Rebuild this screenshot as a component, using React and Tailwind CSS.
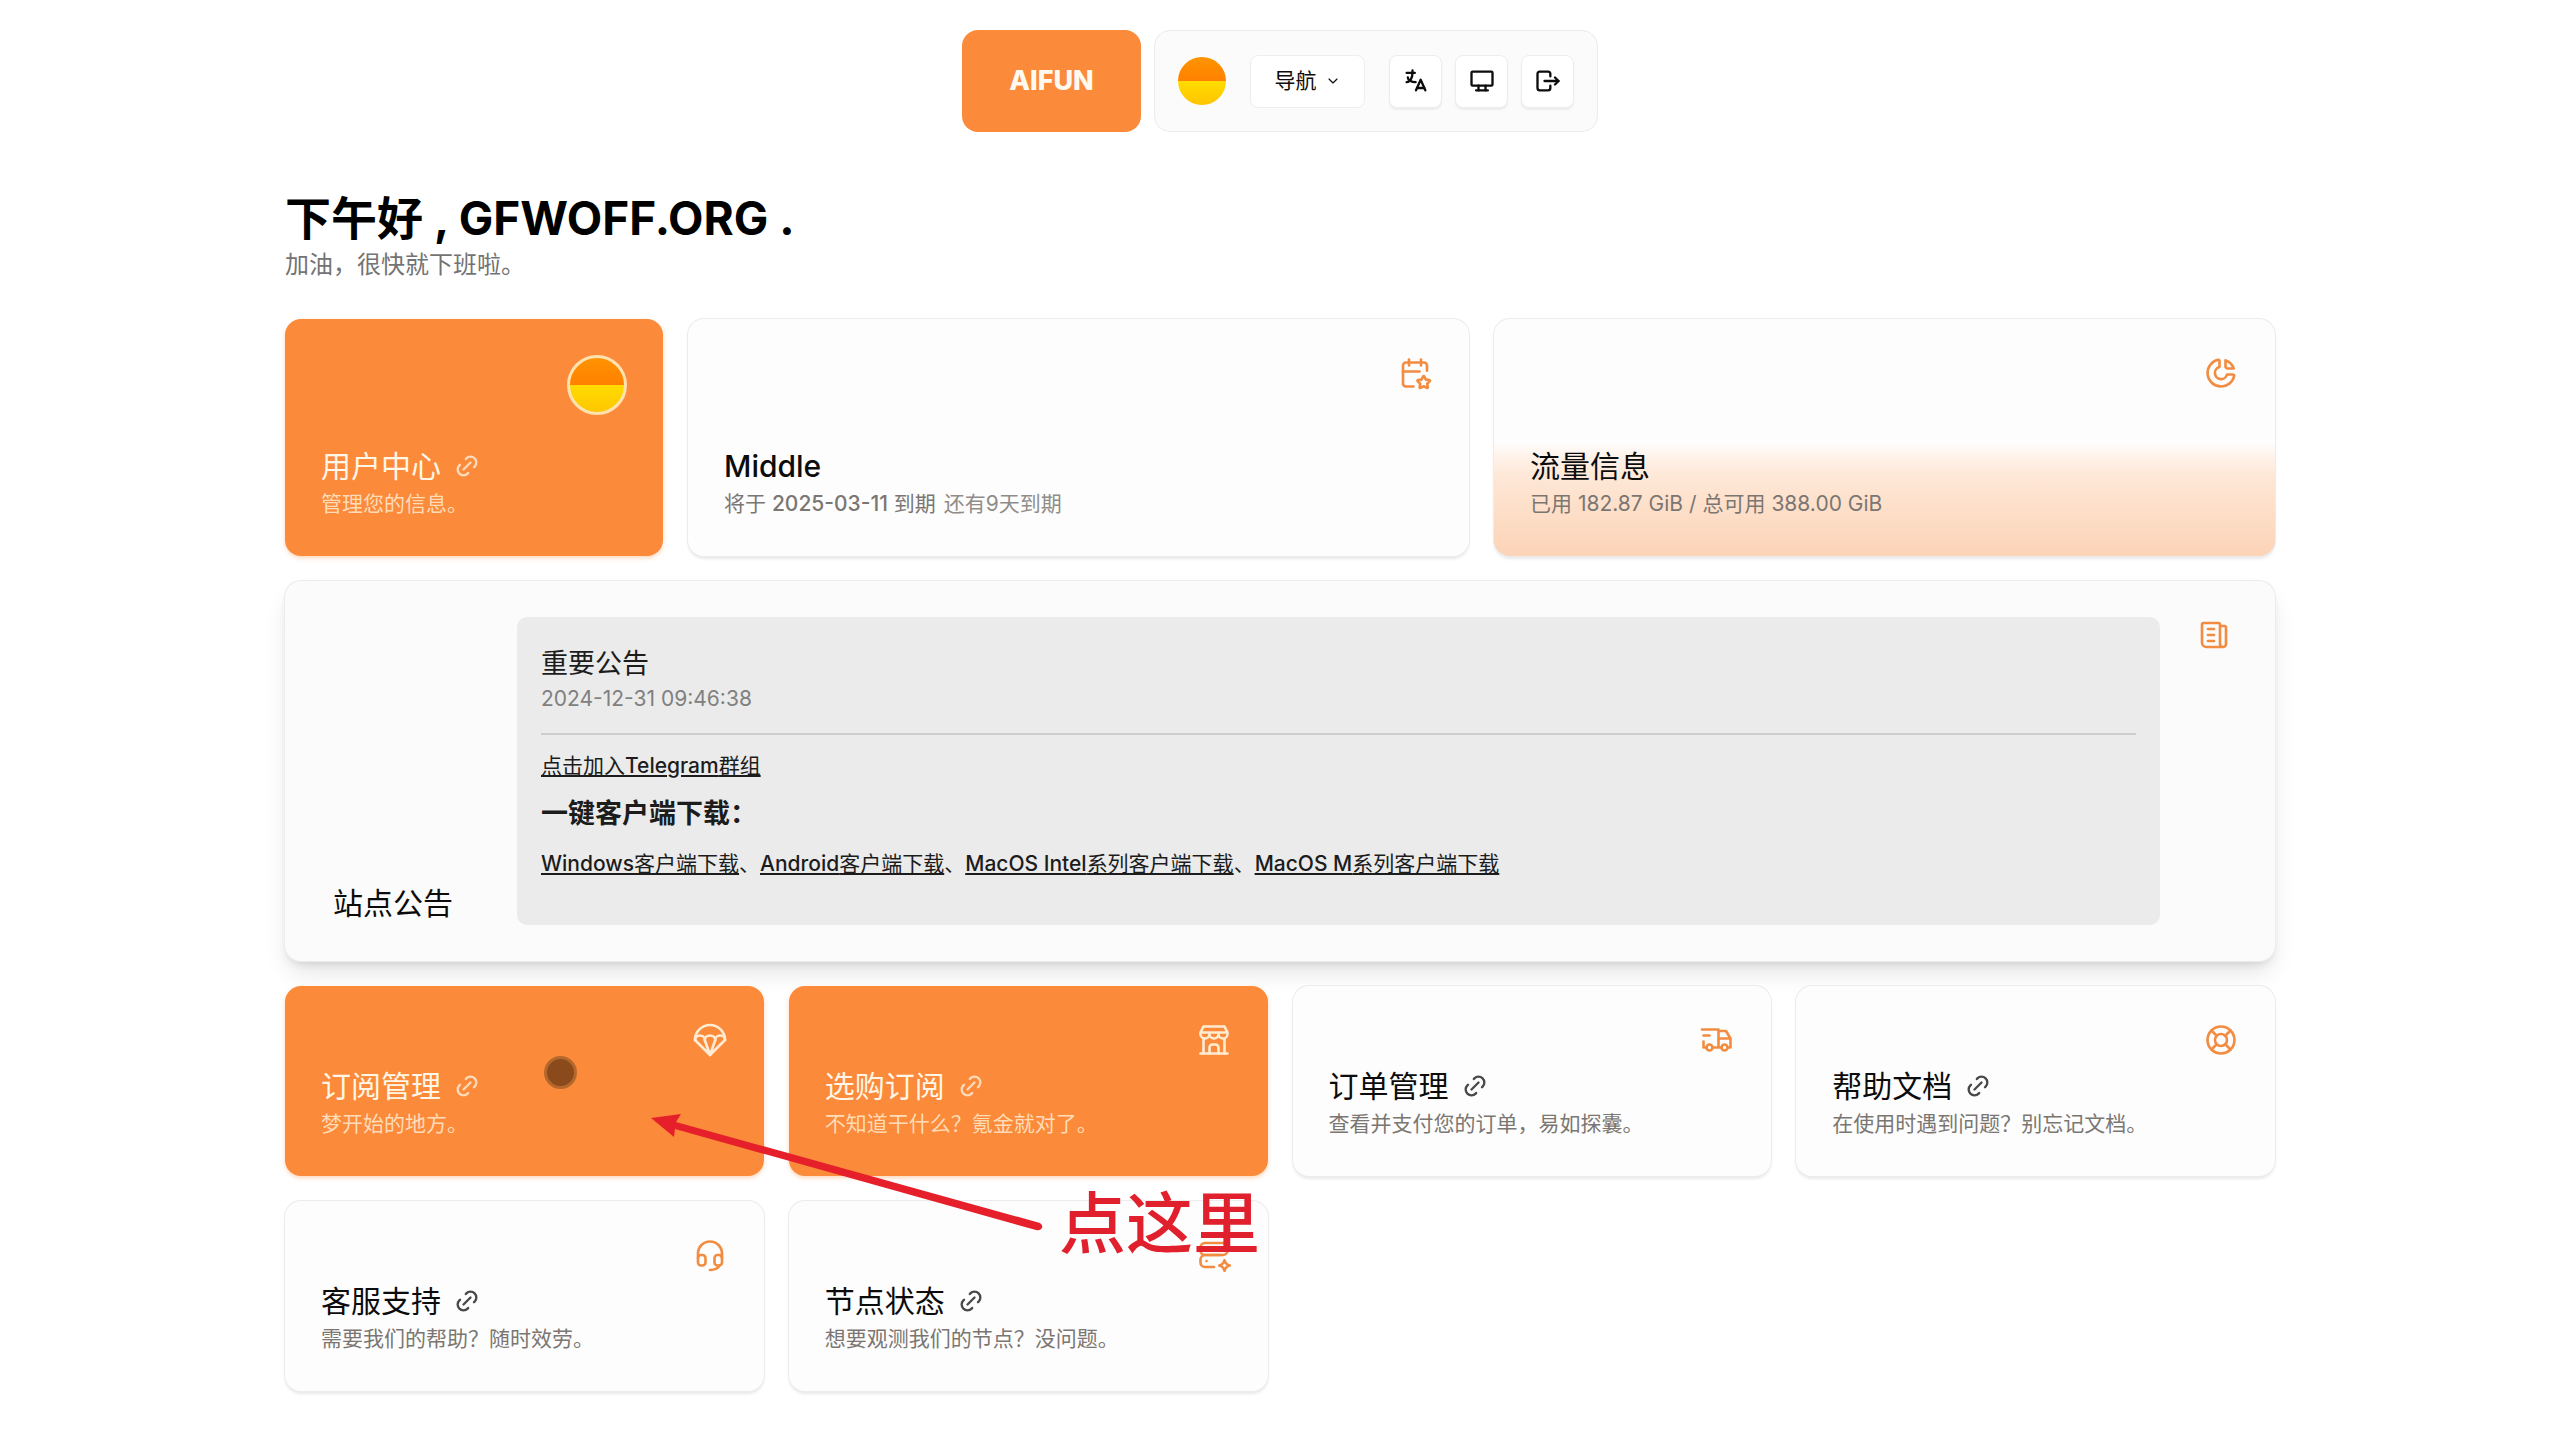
/**
 * Dashboard: top bar, greeting, plan overview, site notice and shortcut cards.
 */

import clsx from 'clsx';
import {
  TbBuildingStore,
  TbCalendarStar,
  TbChartDonut,
  TbChevronDown,
  TbDeviceDesktop,
  TbHeadset,
  TbLanguage,
  TbLifebuoy,
  TbLink,
  TbLogout,
  TbNews,
  TbParachute,
  TbServerSpark,
  TbTruckDelivery,
} from 'react-icons/tb';

const SHORTCUTS = [
  { title: '订阅管理', text: '梦开始的地方。', icon: TbParachute, primary: true },
  { title: '选购订阅', text: '不知道干什么？氪金就对了。', icon: TbBuildingStore, primary: true },
  { title: '订单管理', text: '查看并支付您的订单，易如探囊。', icon: TbTruckDelivery },
  { title: '帮助文档', text: '在使用时遇到问题？别忘记文档。', icon: TbLifebuoy },
  { title: '客服支持', text: '需要我们的帮助？随时效劳。', icon: TbHeadset },
  { title: '节点状态', text: '想要观测我们的节点？没问题。', icon: TbServerSpark },
];

const DOWNLOADS = [
  { platform: 'Windows', rest: '客户端下载' },
  { platform: 'Android', rest: '客户端下载' },
  { platform: 'MacOS Intel', rest: '系列客户端下载' },
  { platform: 'MacOS M', rest: '系列客户端下载' },
];

const TOOLS = [
  { label: '语言', icon: TbLanguage },
  { label: '主题', icon: TbDeviceDesktop },
  { label: '退出', icon: TbLogout },
];

const card = 'flex flex-col justify-between rounded-2xl p-9';
const plain = 'bg-[#fdfdfd] shadow-[0_0_0_1px_#ececec,0_3px_3px_rgba(0,0,0,0.09)]';
const orange = 'bg-[#fb8a3a] text-[#fff6e6] shadow-[0_2px_4px_rgba(251,138,58,0.35)]';
const cardIcon = 'size-9 self-end text-[#f28c41] [stroke-width:1.75]';

function Avatar({ className }) {
  return (
    <span
      className={clsx(
        'block rounded-full bg-[linear-gradient(#ff9500,#ff8000_50%,#ffdc00_50%,#ffc400)] bg-origin-border',
        className
      )}
      aria-hidden="true"
    />
  );
}

function CardText({ title, link, primary, children }) {
  return (
    <div>
      <h2 className="flex items-center gap-3 text-[30px] leading-[44px]">
        {title}
        {link && <TbLink className="size-7 opacity-75" aria-hidden="true" />}
      </h2>
      <p className={clsx('text-[21px] leading-8', primary ? 'text-[#ffdcb8]' : 'text-[#7b7672]')}>
        {children}
      </p>
    </div>
  );
}

function Shortcut({ title, text, icon: Icon, primary }) {
  return (
    <a href="#" className={clsx(card, 'min-h-[190px]', primary ? orange : plain)}>
      <Icon
        className={primary ? 'size-9 self-end text-[#ffecd2] [stroke-width:1.75]' : cardIcon}
        aria-hidden="true"
      />
      <CardText title={title} link primary={primary}>{text}</CardText>
    </a>
  );
}

function TopBar() {
  return (
    <header className="flex justify-center gap-[13px] pt-[30px]">
      <a
        href="#"
        className="flex h-[102px] w-[179px] items-center justify-center rounded-2xl bg-[#fb8a3a] text-[27px] font-extrabold text-[#fffaf0]"
      >
        AIFUN
      </a>
      <nav className="flex h-[102px] items-center rounded-2xl border border-[#ebebeb] bg-[#fbfbfb] px-[23px]">
        <Avatar className="size-12" />
        <button
          type="button"
          className="ml-6 flex h-[53px] w-[115px] items-center justify-center gap-2 rounded-lg border border-[#eeeeee] bg-white text-[21px]"
        >
          导航
          <TbChevronDown className="size-4 [stroke-width:1.75]" aria-hidden="true" />
        </button>
        <div className="ml-6 flex gap-[13px]">
          {TOOLS.map(({ label, icon: Icon }) => (
            <button
              key={label}
              type="button"
              aria-label={label}
              className="flex size-[53px] items-center justify-center rounded-lg border border-[#ededed] bg-white shadow-[0_2px_2px_rgba(0,0,0,0.06)]"
            >
              <Icon className="size-7" />
            </button>
          ))}
        </div>
      </nav>
    </header>
  );
}

function Notice() {
  return (
    <section className="flex rounded-2xl bg-[#fbfbfb] py-9 pr-[43px] pl-12 shadow-[0_0_0_1px_#ececec,0_14px_24px_-4px_rgba(0,0,0,0.12),0_5px_8px_-3px_rgba(0,0,0,0.12)]">
      <h2 className="mr-16 shrink-0 self-end text-[30px] leading-[44px]">站点公告</h2>
      <article className="mr-9 flex-1 rounded-[10px] bg-[#ebebeb] px-6 pt-[26px] pb-[46px] text-[21px] text-[#1c1c1c]">
        <h3 className="text-[27px] leading-[42px]">重要公告</h3>
        <time className="block leading-7 text-[#808080]">2024-12-31 09:46:38</time>
        <hr className="mt-5 border-t-2 border-[#cdcdcd]" />
        <p className="mt-4 leading-[30px]">
          <a href="#" className="underline decoration-2 underline-offset-2">
            点击加入<span className="font-medium">Telegram</span>群组
          </a>
        </p>
        <h4 className="mt-3 text-[27px] leading-[42px] font-bold">一键客户端下载：</h4>
        <p className="mt-[14px] leading-[30px]">
          {DOWNLOADS.map(({ platform, rest }, i) => (
            <span key={platform}>
              {i > 0 && '、'}
              <a href="#" className="underline decoration-2 underline-offset-2">
                <span className="font-medium">{platform}</span>
                {rest}
              </a>
            </span>
          ))}
        </p>
      </article>
      <TbNews className="size-9 text-[#f28c41] [stroke-width:1.75]" aria-hidden="true" />
    </section>
  );
}

/** Pointer dot, arrow and caption that lie over the shortcut cards. */
function Callout() {
  return (
    <div className="pointer-events-none absolute inset-0">
      <span className="absolute top-[70px] left-[259px] size-[33px] rounded-full border-3 border-[#b5682c] bg-[#8b4a1b]" />
      <svg className="absolute top-[121px] left-[360px]" width="400" height="130" viewBox="0 0 400 130" aria-hidden="true">
        <path
          d="M6 11 L36 7 L31 15 L395 116 Q398 118 397 121 Q395 124 391 123 L30 22 L29 30 Z"
          fill="#e6202a"
        />
      </svg>
      <p className="absolute top-[198px] left-[774px] text-[67px] leading-[80px] font-medium text-[#e0202c]">点这里</p>
    </div>
  );
}

export default function App() {
  return (
    <div className="min-h-screen bg-white px-6 pb-12 font-['Inter','Noto_Sans_CJK_SC',sans-serif] text-[#0c0c0c]">
      <TopBar />
      <main className="mx-auto max-w-[1990px]">
        <h1 className="mt-14 text-[46px] leading-[60px] font-bold text-black">下午好 , GFWOFF.ORG .</h1>
        <p className="text-2xl leading-[34px] text-[#737373]">加油，很快就下班啦。</p>

        <div className="mt-[37px] flex flex-col gap-[25px]">
          <div className="grid grid-cols-5 gap-[25px]">
            <a href="#" className={clsx(card, orange, 'min-h-[237px]')}>
              <Avatar className="size-[60px] self-end border-3 border-[#ffe2ae]" />
              <CardText title="用户中心" link primary>管理您的信息。</CardText>
            </a>
            <section className={clsx(card, plain, 'col-span-2')}>
              <TbCalendarStar className={cardIcon} aria-hidden="true" />
              <CardText title={<span className="font-medium">Middle</span>}>
                将于 <span className="font-medium">2025-03-11</span> 到期
                <span className="ml-2 text-[#908c89]">还有9天到期</span>
              </CardText>
            </section>
            <section
              className={clsx(
                card,
                plain,
                'col-span-2 bg-[linear-gradient(to_top,#fcd3b6,#fee7d6_33%,#fff1e7_41%,#fdfdfd_48%)]'
              )}
            >
              <TbChartDonut className={cardIcon} aria-hidden="true" />
              <CardText title="流量信息">已用 182.87 GiB / 总可用 388.00 GiB</CardText>
            </section>
          </div>

          <Notice />

          <div className="relative grid grid-cols-4 gap-[25px]">
            {SHORTCUTS.map((item) => (
              <Shortcut key={item.title} {...item} />
            ))}
            <Callout />
          </div>
        </div>
      </main>
    </div>
  );
}
